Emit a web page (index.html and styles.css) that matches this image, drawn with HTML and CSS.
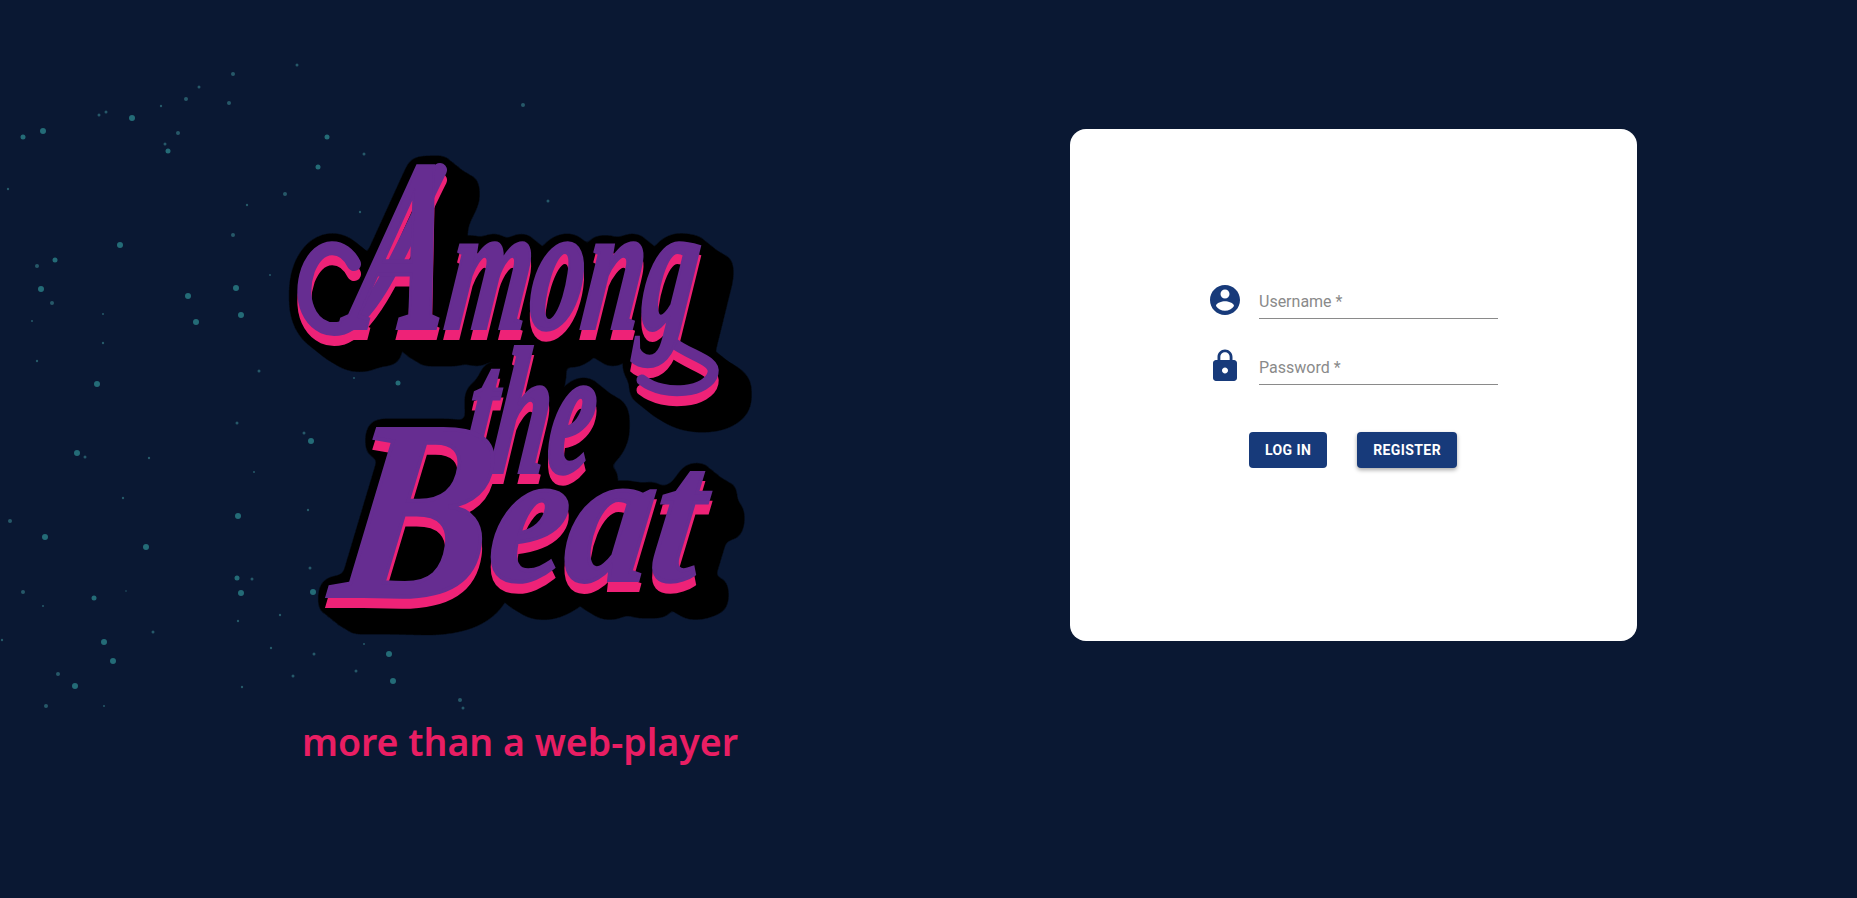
FILE: index.html
```html
<!DOCTYPE html>
<html lang="en">
<head>
    <meta charset="UTF-8">
    <meta name="viewport" content="width=device-width, initial-scale=1.0">
    <title>Among the Beat</title>
    <link rel="stylesheet" href="styles.css">
</head>
<body>
    <!-- star field behind the logo -->
    <svg class="stars" width="560" height="730" viewBox="0 0 560 730" aria-hidden="true">
        <g class="star-big">
            <circle cx="132" cy="118" r="3"/><circle cx="43" cy="131" r="3"/><circle cx="120" cy="245" r="3"/>
            <circle cx="41" cy="289" r="3"/><circle cx="188" cy="296" r="3"/><circle cx="236" cy="288" r="3"/>
            <circle cx="241" cy="315" r="3"/><circle cx="196" cy="322" r="3"/><circle cx="311" cy="441" r="3"/>
            <circle cx="77" cy="453" r="3"/><circle cx="238" cy="516" r="3"/><circle cx="45" cy="537" r="3"/>
            <circle cx="146" cy="547" r="3"/><circle cx="241" cy="593" r="3"/><circle cx="313" cy="592" r="3"/>
            <circle cx="326" cy="591" r="3"/><circle cx="97" cy="384" r="3"/><circle cx="389" cy="654" r="3"/>
            <circle cx="104" cy="642" r="3"/><circle cx="113" cy="661" r="3"/><circle cx="75" cy="686" r="3"/>
            <circle cx="393" cy="681" r="3"/><circle cx="94" cy="598" r="2.5"/><circle cx="168" cy="151" r="2.5"/>
            <circle cx="23" cy="137" r="2.5"/><circle cx="55" cy="260" r="2.5"/><circle cx="237" cy="578" r="2.5"/>
            <circle cx="318" cy="167" r="2.5"/><circle cx="398" cy="383" r="2.5"/><circle cx="327" cy="137" r="2.5"/>
        </g>
        <g class="star-small">
            <circle cx="233" cy="74" r="2"/><circle cx="297" cy="65" r="1.5"/><circle cx="199" cy="87" r="1.5"/>
            <circle cx="186" cy="99" r="2"/><circle cx="229" cy="103" r="2"/><circle cx="161" cy="106" r="1.2"/>
            <circle cx="99" cy="115" r="1.5"/><circle cx="106" cy="112" r="1.5"/><circle cx="178" cy="133" r="2"/>
            <circle cx="165" cy="144" r="1.5"/><circle cx="8" cy="189" r="1.2"/><circle cx="285" cy="194" r="2"/>
            <circle cx="247" cy="205" r="1.2"/><circle cx="233" cy="235" r="2"/><circle cx="37" cy="266" r="2"/>
            <circle cx="52" cy="303" r="2"/><circle cx="270" cy="275" r="1"/><circle cx="103" cy="314" r="1"/>
            <circle cx="32" cy="321" r="1"/><circle cx="103" cy="343" r="1.2"/><circle cx="237" cy="423" r="1.5"/>
            <circle cx="304" cy="433" r="1.5"/><circle cx="254" cy="472" r="1"/><circle cx="85" cy="457" r="1.5"/>
            <circle cx="149" cy="458" r="1.2"/><circle cx="123" cy="498" r="1.2"/><circle cx="308" cy="510" r="1.2"/>
            <circle cx="10" cy="521" r="2"/><circle cx="252" cy="579" r="1.5"/><circle cx="310" cy="568" r="1.5"/>
            <circle cx="23" cy="592" r="2"/><circle cx="126" cy="591" r=".8"/><circle cx="43" cy="606" r="1"/>
            <circle cx="280" cy="615" r="1.2"/><circle cx="238" cy="621" r="1.2"/><circle cx="153" cy="632" r="1.5"/>
            <circle cx="2" cy="640" r="1.2"/><circle cx="271" cy="648" r="1.2"/><circle cx="314" cy="654" r="1.5"/>
            <circle cx="364" cy="644" r="1"/><circle cx="356" cy="671" r="1.5"/><circle cx="293" cy="676" r="1.5"/>
            <circle cx="58" cy="674" r="2"/><circle cx="242" cy="687" r="1.2"/><circle cx="46" cy="706" r="2"/>
            <circle cx="104" cy="706" r="1"/><circle cx="460" cy="700" r="2"/><circle cx="463" cy="708" r="1.5"/>
            <circle cx="523" cy="105" r="2"/><circle cx="364" cy="154" r="1.5"/><circle cx="360" cy="212" r="1.2"/>
            <circle cx="548" cy="201" r="1.5"/><circle cx="354" cy="378" r="1"/><circle cx="259" cy="371" r="1.5"/>
            <circle cx="37" cy="361" r="1.2"/><circle cx="149" cy="458" r="1"/>
        </g>
    </svg>

    <main class="page">
        <section class="brand">
            <svg class="logo" width="500" height="560" viewBox="0 -40 500 560" role="img" aria-label="Among the Beat">
                <defs>
                    <filter id="sticker" filterUnits="userSpaceOnUse" x="0" y="-40" width="500" height="560" color-interpolation-filters="sRGB">
                        <feOffset in="SourceAlpha" dy="10" result="drop"/>
                        <feMerge result="body">
                            <feMergeNode in="drop"/>
                            <feMergeNode in="SourceAlpha"/>
                        </feMerge>
                        <!-- blur and threshold gives the round sticker edge -->
                        <feGaussianBlur in="body" stdDeviation="6" result="soft"/>
                        <feComponentTransfer in="soft" result="round">
                            <feFuncA type="linear" slope="30" intercept="-1.5"/>
                        </feComponentTransfer>
                        <feOffset in="round" dx="5" dy="4" result="s1"/>
                        <feOffset in="round" dx="10" dy="8" result="s2"/>
                        <feOffset in="round" dx="15" dy="12" result="s3"/>
                        <feOffset in="round" dx="20" dy="15" result="s4"/>
                        <feOffset in="round" dx="25" dy="18" result="s5"/>
                        <feMerge result="black">
                            <feMergeNode in="round"/>
                            <feMergeNode in="s1"/>
                            <feMergeNode in="s2"/>
                            <feMergeNode in="s3"/>
                            <feMergeNode in="s4"/>
                            <feMergeNode in="s5"/>
                        </feMerge>
                        <feFlood flood-color="#ee2277"/>
                        <feComposite in2="drop" operator="in" result="pink"/>
                        <feMerge>
                            <feMergeNode in="black"/>
                            <feMergeNode in="pink"/>
                            <feMergeNode in="SourceGraphic"/>
                        </feMerge>
                    </filter>
                </defs>
                <g filter="url(#sticker)">
                    <path class="swash" d="M84 134C74 114 50 110 38 140C26 175 45 205 72 198C105 188 135 110 170 40"/>
                    <path class="swash swash-thin" d="M402 212C420 226 446 230 443 243C439 262 395 268 372 250"/>
                    <text class="logo-word" x="76" y="198" textLength="345" lengthAdjust="spacingAndGlyphs" transform="translate(28 0) skewX(-8)"><tspan class="logo-cap">A</tspan>mong</text>
                    <text class="logo-word" x="190" y="342" textLength="128" lengthAdjust="spacingAndGlyphs" transform="translate(48 0) skewX(-8)">the</text>
                    <text class="logo-word logo-word-low" x="62" y="450" textLength="362" lengthAdjust="spacingAndGlyphs" transform="translate(63 0) skewX(-8)"><tspan class="logo-cap-b" dy="16">B</tspan><tspan dy="-16">eat</tspan></text>
                </g>
            </svg>
            <p class="tagline">more than a web-player</p>
        </section>

        <section class="panel">
            <form class="login-card">
                <div class="field">
                    <svg class="field-icon" viewBox="0 0 24 24"><path d="M12 2C6.48 2 2 6.48 2 12s4.48 10 10 10 10-4.48 10-10S17.52 2 12 2zm0 3c1.66 0 3 1.34 3 3s-1.34 3-3 3-3-1.34-3-3 1.34-3 3-3zm0 14.2c-2.5 0-4.71-1.28-6-3.22.03-1.99 4-3.08 6-3.08 1.99 0 5.97 1.09 6 3.08-1.29 1.94-3.5 3.22-6 3.22z"/></svg>
                    <label class="field-label">Username *</label>
                </div>
                <div class="field">
                    <svg class="field-icon" viewBox="0 0 24 24"><path d="M18 8h-1V6c0-2.76-2.24-5-5-5S7 3.24 7 6v2H6c-1.1 0-2 .9-2 2v10c0 1.1.9 2 2 2h12c1.1 0 2-.9 2-2V10c0-1.1-.9-2-2-2zm-6 9c-1.1 0-2-.9-2-2s.9-2 2-2 2 .9 2 2-.9 2-2 2zm3.1-9H8.9V6c0-1.71 1.39-3.1 3.1-3.1 1.71 0 3.1 1.39 3.1 3.1v2z"/></svg>
                    <label class="field-label">Password *</label>
                </div>
                <div class="actions">
                    <button type="button" class="btn">Log in</button>
                    <button type="button" class="btn btn-raised">Register</button>
                </div>
            </form>
        </section>
    </main>
</body>
</html>
```

FILE: styles.css
```css
html, body {
    margin: 0;
    height: 100%;
}

body {
    background-color: #0a1833;
    font-family: Roboto, Arial, sans-serif;
    overflow: hidden;
    position: relative;
}

.stars {
    position: absolute;
    left: 0;
    top: 0;
    filter: blur(0.7px);
}

.star-big {
    fill: #2f8f94;
    opacity: 0.7;
}

.star-small {
    fill: #3f8f96;
    opacity: 0.55;
}

.page {
    position: relative;
    display: flex;
    height: 898px;
}

.brand {
    width: 1040px;
    padding-top: 90px;
    display: flex;
    flex-direction: column;
    align-items: center;
    box-sizing: border-box;
}

.logo {
    display: block;
    overflow: visible;
}

.swash {
    fill: none;
    stroke: #662d91;
    stroke-width: 14;
    stroke-linecap: round;
}

.swash-thin {
    stroke-width: 11;
}

.logo-word {
    font-family: "Liberation Serif", serif;
    font-weight: 700;
    font-style: italic;
    font-size: 180px;
    fill: #662d91;
    stroke: #662d91;
    stroke-width: 4;
}

.logo-word-low {
    font-size: 190px;
}

.logo-cap {
    font-size: 245px;
}

.logo-cap-b {
    font-size: 255px;
}

.tagline {
    margin: 68px 0 0;
    color: #e91e63;
    font-family: "Noto Sans", sans-serif;
    font-size: 37.5px;
    font-weight: 600;
    line-height: 48px;
}

.panel {
    padding: 129px 0 0 30px;
}

.login-card {
    width: 567px;
    height: 512px;
    box-sizing: border-box;
    padding: 152px 0 0 137px;
    background-color: #fff;
    border-radius: 16px;
}

.field {
    display: flex;
    align-items: center;
    gap: 16px;
    height: 38px;
    margin-bottom: 28px;
}

.field-icon {
    width: 36px;
    height: 36px;
    fill: #173a7a;
}

.field-label {
    width: 239px;
    height: 37px;
    box-sizing: border-box;
    padding-top: 8px;
    border-bottom: 1px solid #8a8a8a;
    color: #8a8a8a;
    font-size: 16px;
    line-height: 24px;
    align-self: flex-end;
}

.actions {
    display: flex;
    gap: 30px;
    margin: 47px 0 0 42px;
}

.btn {
    height: 36px;
    padding: 0 16px;
    border: none;
    border-radius: 4px;
    background-color: #173a7a;
    color: #fff;
    font-family: Roboto, Arial, sans-serif;
    font-size: 14px;
    font-weight: 700;
    letter-spacing: 0.4px;
    text-transform: uppercase;
}

.btn-raised {
    box-shadow: 0 2px 4px rgba(0, 0, 0, 0.35);
}
```
